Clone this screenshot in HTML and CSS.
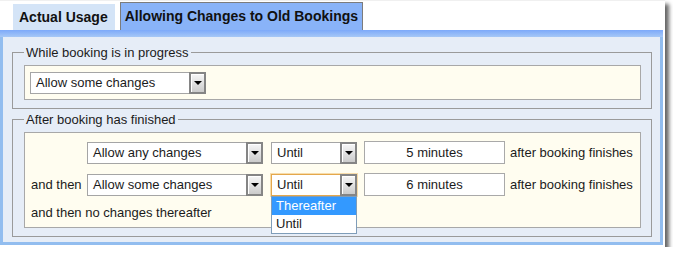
FILE: index.html
```html
<!DOCTYPE html>
<html lang="en">
<head>
    <meta charset="UTF-8">
    <title>Booking Changes</title>
    <link rel="stylesheet" href="styles.css">
</head>
<body>
    <div class="window">
        <!-- Tabs -->
        <div class="tabs">
            <div class="tab">Actual Usage</div>
            <div class="tab active">Allowing Changes to Old Bookings</div>
        </div>

        <div class="panel">
            <div class="panel-bar"></div>
            <div class="panel-body">

                <fieldset class="group">
                    <legend>While booking is in progress</legend>
                    <div class="box box-single">
                        <div class="select wide">
                            <span class="select-text">Allow some changes</span>
                            <span class="select-btn"><span class="arrow"></span></span>
                        </div>
                    </div>
                </fieldset>

                <fieldset class="group second">
                    <legend>After booking has finished</legend>
                    <div class="box box-rows">
                        <div class="row">
                            <span class="label"></span>
                            <div class="select wide">
                                <span class="select-text">Allow any changes</span>
                                <span class="select-btn"><span class="arrow"></span></span>
                            </div>
                            <div class="select short">
                                <span class="select-text">Until</span>
                                <span class="select-btn"><span class="arrow"></span></span>
                            </div>
                            <div class="field">5 minutes</div>
                            <span class="after">after booking finishes</span>
                        </div>
                        <div class="row">
                            <span class="label">and then</span>
                            <div class="select wide">
                                <span class="select-text">Allow some changes</span>
                                <span class="select-btn"><span class="arrow"></span></span>
                            </div>
                            <div class="select short focused">
                                <span class="select-text">Until</span>
                                <span class="select-btn"><span class="arrow"></span></span>
                                <!-- open dropdown list -->
                                <div class="dropdown">
                                    <div class="option selected">Thereafter</div>
                                    <div class="option">Until</div>
                                </div>
                            </div>
                            <div class="field">6 minutes</div>
                            <span class="after">after booking finishes</span>
                        </div>
                        <div class="row-last">and then no changes thereafter</div>
                    </div>
                </fieldset>

            </div>
        </div>
    </div>
</body>
</html>
```

FILE: styles.css
```css
/* General Styles */
body {
    margin: 0;
    background: #fff;
    font-family: "Liberation Sans", Arial, sans-serif;
    font-size: 13px;
    color: #1b1b1b;
}

.window {
    width: 665px;
    height: 247px;
    box-sizing: border-box;
    background: #fff;
    border-top: 1px solid #f0f0f0;
    box-shadow: 4px 4px 4px rgba(0, 0, 0, 0.6);
}

/* Tabs */
.tabs {
    display: flex;
    align-items: flex-end;
    gap: 5px;
    height: 29px;
    padding-left: 13px;
}

.tab {
    height: 26px;
    line-height: 26px;
    padding: 0 7px 0 6px;
    background: #d4e4f7;
    font-size: 14px;
    font-weight: bold;
    color: #111;
}

.tab.active {
    height: 27px;
    line-height: 27px;
    padding: 0 4px;
    background: #89b3f8;
    border: 1px solid #7c7c7c;
    border-bottom: none;
}

/* Panel */
.panel-bar {
    height: 7px;
    width: 663px;
    background: linear-gradient(#7da9fa, #a6c8f6);
}

.panel-body {
    width: 663px;
    height: 208px;
    box-sizing: border-box;
    background: #e6edf7;
    border: 3px solid #92bdef;
    border-top: none;
    padding: 8px 8px 0 9px;
}

/* Fieldsets */
.group {
    margin: 0;
    padding: 5px 10px 8px 11px;
    border: 1px solid #9a9a9a;
}

.group.second {
    margin-top: 3px;
}

.group legend {
    padding: 0 2px;
    line-height: 15px;
    color: #1b1b1b;
}

.box {
    background: #fffdf0;
    border: 1px solid #a8a8a8;
}

.box-single {
    padding: 6px 5px 5px 5px;
}

.box-rows {
    padding: 8px 0 7px 6px;
}

.row {
    display: flex;
    align-items: center;
    height: 23px;
    margin-bottom: 9px;
}

.label {
    width: 56px;
    flex-shrink: 0;
}

.row-last {
    line-height: 15px;
}

/* Select look-alike */
.select {
    position: relative;
    display: flex;
    align-items: stretch;
    height: 22px;
    box-sizing: border-box;
    background: #fff;
    border: 1px solid #a5a5a5;
}

.select.wide {
    width: 176px;
    margin-right: 8px;
}

.select.short {
    width: 86px;
    margin-right: 7px;
}

.select.focused {
    border-color: #e4a84c;
    box-shadow: 0 0 0 1px #f7dcaa;
}

.select-text {
    flex: 1;
    padding-left: 5px;
    line-height: 20px;
    white-space: nowrap;
}

.select-btn {
    width: 17px;
    margin: -1px -1px -1px 0;
    box-sizing: border-box;
    border: 2px solid #858585;
    box-shadow: inset 1px 1px 0 #fff;
    background: linear-gradient(#f7f7f7, #cbcbcb);
    display: flex;
    align-items: center;
    justify-content: center;
}

.arrow {
    width: 0;
    height: 0;
    border-left: 4px solid transparent;
    border-right: 4px solid transparent;
    border-top: 4px solid #000;
}

.dropdown {
    position: absolute;
    top: 21px;
    left: -1px;
    width: 86px;
    box-sizing: border-box;
    background: #fff;
    border: 1px solid #7f9db9;
    z-index: 2;
}

.option {
    height: 18px;
    line-height: 18px;
    padding-left: 4px;
}

.option.selected {
    background: #3399ff;
    color: #fff;
}

/* Text fields */
.field {
    width: 141px;
    height: 23px;
    box-sizing: border-box;
    line-height: 21px;
    text-align: center;
    background: #fff;
    border: 1px solid #a9a9a9;
    margin-right: 5px;
}

.after {
    white-space: nowrap;
}
```
